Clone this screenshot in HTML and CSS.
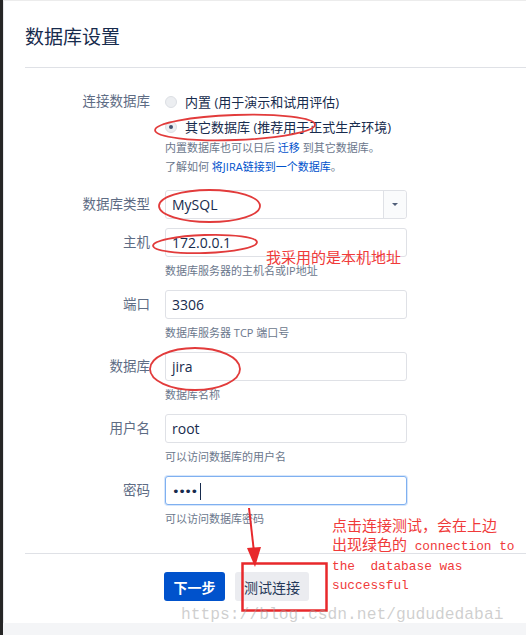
FILE: index.html
```html
<!DOCTYPE html>
<html lang="zh-CN">
<head>
    <meta charset="UTF-8">
    <meta name="viewport" content="width=device-width, initial-scale=1.0">
    <title>数据库设置</title>
    <link rel="stylesheet" href="styles.css">
</head>
<body>
    <div class="page">
        <div class="dialog">
            <div class="dialog-header">
                <h2>数据库设置</h2>
            </div>

            <div class="form">
                <div class="row row-radio">
                    <div class="label">连接数据库</div>
                    <div class="field">
                        <div class="radio-line"><span class="radio"></span>内置 (用于演示和试用评估)</div>
                        <div class="radio-line"><span class="radio checked"></span>其它数据库 (推荐用于正式生产环境)</div>
                        <div class="help first">内置数据库也可以日后 <a href="#">迁移</a> 到其它数据库。</div>
                        <div class="help">了解如何 <a href="#">将JIRA链接到一个数据库</a>。</div>
                    </div>
                </div>

                <div class="row row-select">
                    <div class="label">数据库类型</div>
                    <div class="field">
                        <div class="select">
                            <span class="select-value">MySQL</span>
                            <span class="select-arrow"></span>
                        </div>
                    </div>
                </div>

                <div class="row">
                    <div class="label">主机</div>
                    <div class="field">
                        <div class="input">172.0.0.1</div>
                        <div class="help">数据库服务器的主机名或IP地址</div>
                    </div>
                </div>

                <div class="row">
                    <div class="label">端口</div>
                    <div class="field">
                        <div class="input">3306</div>
                        <div class="help">数据库服务器 TCP 端口号</div>
                    </div>
                </div>

                <div class="row">
                    <div class="label">数据库</div>
                    <div class="field">
                        <div class="input">jira</div>
                        <div class="help">数据库名称</div>
                    </div>
                </div>

                <div class="row">
                    <div class="label">用户名</div>
                    <div class="field">
                        <div class="input">root</div>
                        <div class="help">可以访问数据库的用户名</div>
                    </div>
                </div>

                <div class="row">
                    <div class="label">密码</div>
                    <div class="field">
                        <div class="input focused"><span class="dots">••••</span><span class="caret"></span></div>
                        <div class="help">可以访问数据库密码</div>
                    </div>
                </div>
            </div>

            <div class="footer">
                <button class="btn btn-primary">下一步</button>
                <button class="btn btn-default">测试连接</button>
            </div>
        </div>

        <!-- annotations drawn on top of the screenshot -->
        <svg class="marks" width="526" height="635" viewBox="0 0 526 635">
            <ellipse cx="235" cy="127.5" rx="80" ry="12.5" transform="rotate(-2 235 127.5)"/>
            <ellipse cx="209.5" cy="206" rx="50.5" ry="16"/>
            <ellipse cx="205" cy="244" rx="52" ry="9" transform="rotate(-2 205 244)"/>
            <ellipse cx="195" cy="369" rx="45" ry="21"/>
            <rect x="242.5" y="563.5" width="84" height="47" class="box"/>
            <line x1="249" y1="508" x2="254" y2="552" class="arrow-line"/>
            <polygon points="247,548 261,547 255,567" class="arrow-head"/>
        </svg>
        <div class="note note-host">我采用的是本机地址</div>
        <div class="note note-test">
            <div class="note-line">点击连接测试，会在上边</div>
            <div class="note-line">出现绿色的<span class="mono"> connection to</span></div>
            <div class="note-line"><span class="mono">the  database was</span></div>
            <div class="note-line"><span class="mono">successful</span></div>
        </div>
        <div class="watermark">https://blog.csdn.net/gududedabai</div>
    </div>
</body>
</html>
```

FILE: styles.css
```css
body {
    margin: 0;
    font-family: "Open Sans", "Noto Sans CJK SC", sans-serif;
    color: #172b4d;
    background-color: #f4f5f7;
}
.page {
    position: relative;
    width: 526px;
    height: 635px;
    padding-left: 3px;
    box-sizing: border-box;
    background: linear-gradient(#262626, #262626) left top / 3px 100% no-repeat, #f4f5f7;
    overflow: hidden;
}
.dialog {
    height: 623px;
    background-color: #fff;
    border-left: 1px solid #e6e7ea;
    border-top: 1px solid #ececec;
    box-sizing: border-box;
}
.dialog-header {
    margin-left: 21px;
    height: 67px;
    padding-top: 3px;
    box-sizing: border-box;
    display: flex;
    align-items: center;
    border-bottom: 1px solid #dfe1e6;
}
h2 {
    margin: 0;
    font-size: 19px;
    font-weight: normal;
    color: #172b4d;
}
.form {
    padding: 21px 0 0 21px;
}
.row {
    display: grid;
    grid-template-columns: 125px 242px;
    column-gap: 15px;
}
.row + .row {
    margin-top: 10px;
}
.row.row-select {
    margin-top: 14px;
}
.row.row-select + .row {
    margin-top: 9px;
}
.label {
    text-align: right;
    font-size: 13.5px;
    line-height: 29px;
    color: #5e6c84;
}
.row-radio .label {
    line-height: 25px;
}
.radio-line {
    display: flex;
    align-items: center;
    height: 25px;
    font-size: 13px;
    color: #172b4d;
}
.radio {
    width: 10px;
    height: 10px;
    border: 1px solid #dcdfe4;
    border-radius: 50%;
    background-color: #eceef1;
    margin-right: 8px;
    position: relative;
}
.radio.checked::after {
    content: "";
    position: absolute;
    left: 3px;
    top: 3px;
    width: 4px;
    height: 4px;
    border-radius: 50%;
    background-color: #42526e;
}
.help {
    font-size: 11px;
    line-height: 18px;
    color: #6b778c;
    margin-top: 5px;
}
.help.first {
    margin-top: 0;
}
.help + .help {
    margin-top: 1px;
}
.help a {
    color: #0052cc;
    text-decoration: none;
}
.input,
.select {
    height: 29px;
    border: 1px solid #dfe1e6;
    border-radius: 3px;
    box-sizing: border-box;
    background-color: #fff;
    font-size: 14px;
    line-height: 27px;
    padding-left: 6px;
    color: #172b4d;
}
.input.focused {
    border-color: #7fb0f0;
    box-shadow: 0 0 0 1px #d6e6fb;
}
.dots {
    font-family: "DejaVu Sans", sans-serif;
    font-size: 13px;
    letter-spacing: -1.5px;
    color: #172b4d;
}
.caret {
    display: inline-block;
    width: 1px;
    height: 17px;
    background-color: #172b4d;
    vertical-align: -4px;
    margin-left: 3px;
}
.select {
    display: flex;
    padding-left: 6px;
    padding-right: 0;
}
.select-value {
    flex: 1;
}
.select-arrow {
    width: 22px;
    border-left: 1px solid #dfe1e6;
    background-color: #fafbfc;
    position: relative;
    border-radius: 0 3px 3px 0;
}
.select-arrow::after {
    content: "";
    position: absolute;
    left: 8px;
    top: 12px;
    border-left: 3px solid transparent;
    border-right: 3px solid transparent;
    border-top: 3px solid #505f79;
}
.footer {
    margin: 25px 0 0 21px;
    padding: 18px 0 0 139px;
    border-top: 1px solid #dfe1e6;
    display: flex;
    gap: 10px;
}
.btn {
    height: 29px;
    border: none;
    border-radius: 3px;
    font-family: "Noto Sans CJK SC", sans-serif;
    font-size: 14px;
    padding: 0;
    white-space: nowrap;
    cursor: pointer;
}
.btn-primary {
    width: 61px;
    background-color: #0052cc;
    color: #fff;
    font-weight: bold;
}
.btn-default {
    width: 74px;
    background-color: #ebecf0;
    color: #253858;
}
.marks {
    position: absolute;
    left: 0;
    top: 0;
    pointer-events: none;
}
.marks ellipse,
.marks .box {
    fill: none;
    stroke: #e23b3b;
    stroke-width: 1.8;
}
.marks .box {
    stroke: #e8282b;
    stroke-width: 2.5;
}
.arrow-line {
    stroke: #e8282b;
    stroke-width: 2;
}
.arrow-head {
    fill: #e8282b;
}
.note {
    position: absolute;
    color: #f03a3a;
    font-family: "Noto Sans CJK SC", sans-serif;
    font-size: 15px;
    white-space: nowrap;
}
.note-host {
    left: 266px;
    top: 249px;
    line-height: 16px;
}
.note-test {
    left: 332px;
    top: 515px;
}
.note-line {
    height: 19.3px;
    line-height: 19.3px;
}
.mono {
    font-family: "Liberation Mono", monospace;
    font-size: 12.8px;
    white-space: pre;
}
.watermark {
    position: absolute;
    left: 181px;
    top: 605px;
    font-family: "Liberation Mono", monospace;
    font-size: 16.3px;
    line-height: 20px;
    color: rgba(160, 160, 160, 0.5);
}
```
